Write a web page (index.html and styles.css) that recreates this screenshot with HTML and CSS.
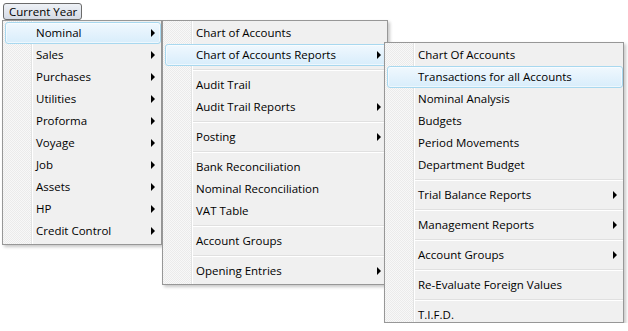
FILE: index.html
```html
<!DOCTYPE html>
<html lang="en">

<head>
    <link rel="stylesheet" href="styles.css">
</head>

<body>
    <div class="toolbar">
        <button class="year-button" type="button">Current Year</button>
    </div>
    <div class="cascade">
        <ul class="menu menu-main">
            <li class="item active has-sub">Nominal</li>
            <li class="item has-sub">Sales</li>
            <li class="item has-sub">Purchases</li>
            <li class="item has-sub">Utilities</li>
            <li class="item has-sub">Proforma</li>
            <li class="item has-sub">Voyage</li>
            <li class="item has-sub">Job</li>
            <li class="item has-sub">Assets</li>
            <li class="item has-sub">HP</li>
            <li class="item has-sub">Credit Control</li>
        </ul>
        <ul class="menu menu-nominal">
            <li class="item">Chart of Accounts</li>
            <li class="item active has-sub">Chart of Accounts Reports</li>
            <li class="sep"></li>
            <li class="item">Audit Trail</li>
            <li class="item has-sub">Audit Trail Reports</li>
            <li class="sep"></li>
            <li class="item has-sub">Posting</li>
            <li class="sep"></li>
            <li class="item">Bank Reconciliation</li>
            <li class="item">Nominal Reconciliation</li>
            <li class="item">VAT Table</li>
            <li class="sep"></li>
            <li class="item">Account Groups</li>
            <li class="sep"></li>
            <li class="item has-sub">Opening Entries</li>
        </ul>
        <ul class="menu menu-reports">
            <li class="item">Chart Of Accounts</li>
            <li class="item active">Transactions for all Accounts</li>
            <li class="item">Nominal Analysis</li>
            <li class="item">Budgets</li>
            <li class="item">Period Movements</li>
            <li class="item">Department Budget</li>
            <li class="sep"></li>
            <li class="item has-sub">Trial Balance Reports</li>
            <li class="sep"></li>
            <li class="item has-sub">Management Reports</li>
            <li class="sep"></li>
            <li class="item has-sub">Account Groups</li>
            <li class="sep"></li>
            <li class="item">Re-Evaluate Foreign Values</li>
            <li class="sep"></li>
            <li class="item item-last">T.I.F.D.</li>
        </ul>
    </div>
</body>

</html>
```

FILE: styles.css
```css
body {
    margin: 0;
    padding: 3px 0 0 3px;
    background: #ffffff;
    font-family: "Open Sans", "Noto Sans", sans-serif;
    font-size: 11.5px;
    color: #000000;
}

.toolbar {
    display: flex;
    height: 17px;
}

.year-button {
    height: 17px;
    padding: 0 4px 0 5px;
    border: 1px solid #6b6b6b;
    border-radius: 3px;
    background: linear-gradient(#eef1f6, #d5dbe5);
    font-family: inherit;
    font-size: 11.5px;
    line-height: 14px;
    color: #000000;
}

.cascade {
    display: flex;
    align-items: flex-start;
    margin-left: -1px;
}

.menu {
    list-style: none;
    margin: 0;
    padding: 1px 0 2px 0;
    border: 1px solid #979797;
    box-shadow: 2px 2px 3px rgba(0, 0, 0, 0.22);
    background:
        linear-gradient(to right, transparent 28px, #e2e3e3 28px, #e2e3e3 29px, #ffffff 29px, #ffffff 30px, #f0f0f0 30px),
        repeating-conic-gradient(#f8f8f8 0 25%, #ebebeb 0 50%) 0 0 / 2px 2px;
}

.menu-main {
    width: 158px;
}

.menu-nominal {
    width: 224px;
}

.menu-reports {
    width: 238px;
    margin-top: 22px;
    margin-left: -4px;
    padding-bottom: 0;
}

.item {
    box-sizing: border-box;
    display: flex;
    align-items: center;
    height: 22px;
    padding-left: 33px;
    padding-right: 6px;
    padding-bottom: 1px;
    white-space: nowrap;
}

.item.active {
    margin-left: 2px;
    padding-left: 30px;
    padding-right: 5px;
    border: 1px solid #a8d8ef;
    border-radius: 3px;
    background: linear-gradient(#f0f8fe, #d8edfb);
    box-shadow: inset 0 0 0 1px rgba(255, 255, 255, 0.55);
}

.item-last {
    height: 18px;
    align-items: flex-start;
    padding-top: 3px;
    padding-bottom: 0;
}

.has-sub::after {
    content: "";
    margin-left: auto;
    border-left: 4px solid #000000;
    border-top: 4px solid transparent;
    border-bottom: 4px solid transparent;
}

.sep {
    height: 8px;
    margin-left: 30px;
    background: linear-gradient(transparent 3px, #e0e0e0 3px, #e0e0e0 4px, #ffffff 4px, #ffffff 5px, transparent 5px);
}
```
